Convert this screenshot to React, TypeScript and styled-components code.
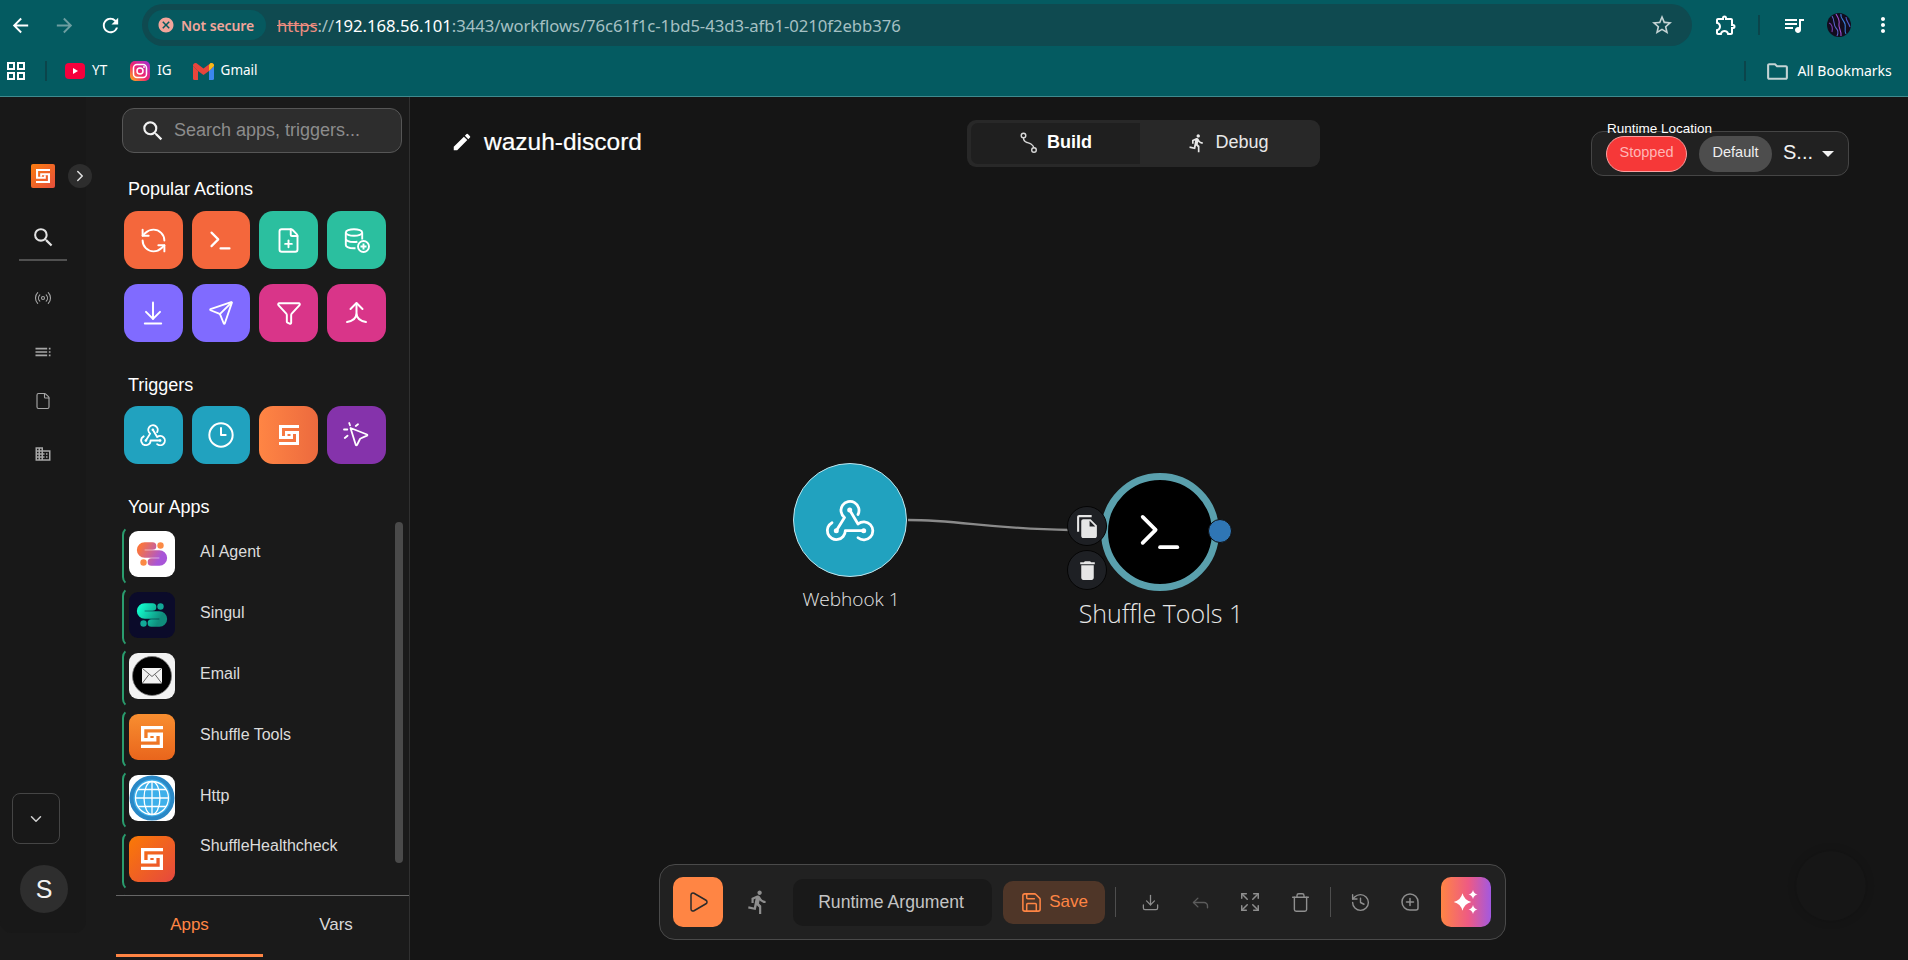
import React from 'react';
import styled, { createGlobalStyle } from 'styled-components';
import {
  ArrowDownToLine,
  ChevronDown,
  ChevronRight,
  Clock3,
  Download,
  Expand,
  File,
  FilePlus,
  Funnel,
  History,
  Play,
  Radio,
  RefreshCcw,
  Reply,
  Save,
  Send,
  Terminal,
  Trash,
} from 'lucide-react';
import {
  MdArrowBack,
  MdArrowForward,
  MdBusiness,
  MdCancel,
  MdDelete,
  MdDirectionsRun,
  MdEdit,
  MdFileCopy,
  MdMoreVert,
  MdOutlineExtension,
  MdOutlineFolder,
  MdQueueMusic,
  MdRefresh,
  MdSearch,
  MdStarBorder,
  MdToc,
} from 'react-icons/md';

const GlobalStyle = createGlobalStyle`
  html, body {
    margin: 0;
    padding: 0;
    background: #151515;
    overflow: hidden;
  }
  * { box-sizing: border-box; }
`;

const Page = styled.div`
  width: 1908px;
  height: 960px;
  display: flex;
  flex-direction: column;
  font-family: 'Liberation Sans', Arial, sans-serif;
  color: #fff;
  overflow: hidden;
`;

/* browser chrome */

const Chrome = styled.header`
  height: 97px;
  flex: none;
  background: #045b61;
  border-bottom: 1px solid #3f8a8e;
  font-family: 'Noto Sans', sans-serif;
`;

const ToolbarRow = styled.div`
  height: 50px;
  display: flex;
  align-items: flex-start;
  padding-top: 4px;
`;

const NavButton = styled.div<{ $w: number; $dim?: boolean }>`
  width: ${(p) => p.$w}px;
  height: 42px;
  display: flex;
  align-items: center;
  justify-content: center;
  color: ${(p) => (p.$dim ? '#6d9ea1' : '#fff')};
  font-size: 23px;
  flex: none;
`;

const UrlBar = styled.div`
  width: 1550px;
  height: 42px;
  margin-left: 10px;
  border-radius: 21px;
  background: #0f4a50;
  display: flex;
  align-items: center;
  padding: 0 18px 0 6px;
  flex: none;
`;

const SecurePill = styled.div`
  width: 118px;
  height: 30px;
  border-radius: 15px;
  background: #06595f;
  color: #f2a59b;
  display: flex;
  align-items: center;
  gap: 6px;
  padding-left: 9px;
  font-size: 14px;
  font-weight: 600;
  letter-spacing: -0.1px;
  white-space: nowrap;
  svg { font-size: 18px; }
`;

const UrlText = styled.div`
  margin-left: 11px;
  font-size: 16.7px;
  color: #a5c0c3;
  white-space: nowrap;
  letter-spacing: -0.05px;
`;

const UrlScheme = styled.span`
  color: #ee8d80;
  text-decoration: line-through;
`;

const UrlHost = styled.span`
  color: #fff;
`;

const StarButton = styled.div`
  margin-left: auto;
  font-size: 24px;
  color: #c4d3d4;
  display: flex;
`;

const ToolIcon = styled.div<{ $ml: number; $w: number }>`
  margin-left: ${(p) => p.$ml}px;
  width: ${(p) => p.$w}px;
  height: 42px;
  flex: none;
  display: flex;
  align-items: center;
  justify-content: center;
  font-size: 24px;
  color: #fff;
`;

const ChromeDivider = styled.div<{ $ml: number; $mt?: number }>`
  margin-left: ${(p) => p.$ml}px;
  margin-top: ${(p) => p.$mt ?? 0}px;
  width: 2px;
  height: 20px;
  background: #0b454b;
  flex: none;
`;

const BookmarksRow = styled.div`
  height: 42px;
  display: flex;
  align-items: center;
  padding-left: 7px;
  font-size: 13.5px;
  color: #fff;
`;

const Bookmark = styled.div<{ $ml: number }>`
  margin-left: ${(p) => p.$ml}px;
  display: flex;
  align-items: center;
  gap: 7px;
  white-space: nowrap;
`;

const BookmarkLabel = styled.span`
  margin-top: -2px;
`;

const AllBookmarks = styled.div`
  margin-left: 19px;
  display: flex;
  align-items: center;
  gap: 8px;
  font-size: 14px;
  white-space: nowrap;
  svg { font-size: 25px; color: #c4d3d4; }
`;

/* main area */

const Main = styled.main`
  flex: 1;
  min-height: 0;
  display: flex;
`;

const LeftArea = styled.aside`
  width: 410px;
  flex: none;
  display: flex;
  background: #1a1a1a;
  border-right: 1px solid #303030;
`;

const Rail = styled.nav`
  width: 86px;
  height: 836px;
  flex: none;
  margin-right: 30px;
  background: #181818;
  border-radius: 0 0 12px 12px;
  padding-top: 67px;
  display: flex;
  flex-direction: column;
  align-items: center;
  position: relative;
`;

const RailBrand = styled.div`
  width: 100%;
  height: 24px;
  padding-left: 31px;
  display: flex;
  align-items: center;
  gap: 13px;
`;

const RailLogo = styled.div`
  width: 24px;
  height: 24px;
  border-radius: 2px;
  background: linear-gradient(135deg, #fb7d10, #e64e3c);
  display: flex;
  align-items: center;
  justify-content: center;
  flex: none;
`;

const ExpandButton = styled.div`
  width: 24px;
  height: 24px;
  border-radius: 50%;
  background: #2d2d2d;
  display: flex;
  align-items: center;
  justify-content: center;
  color: #e0e0e0;
  flex: none;
`;

const RailSearch = styled.div`
  width: 48px;
  height: 73px;
  border-bottom: 2px solid #505050;
  display: flex;
  align-items: center;
  justify-content: center;
  padding-top: 27px;
  font-size: 25px;
  color: #e2e2e2;
`;

const RailNav = styled.div`
  display: grid;
  grid-template-rows: 73px 36px 62px 44px;
  justify-items: center;
  align-items: center;
  color: #a6a6a6;
`;

const RailBottom = styled.div`
  margin-top: auto;
  padding-bottom: 20px;
  display: flex;
  flex-direction: column;
  align-items: center;
`;

const CollapseButton = styled.div`
  width: 48px;
  height: 51px;
  margin-left: -15px;
  border: 1px solid #454545;
  border-radius: 8px;
  display: flex;
  align-items: center;
  justify-content: center;
  color: #d0d0d0;
`;

const UserAvatar = styled.div`
  width: 48px;
  height: 48px;
  margin: 21px 0 0 2px;
  border-radius: 50%;
  background: #2e2e2e;
  display: flex;
  align-items: center;
  justify-content: center;
  font-size: 25px;
  color: #f2f2f2;
`;

const Panel = styled.div`
  flex: 1;
  min-width: 0;
  display: flex;
  flex-direction: column;
  position: relative;
`;

const SearchBox = styled.div`
  height: 45px;
  margin: 11px 7px 0 6px;
  border: 1px solid #565656;
  border-radius: 12px;
  background: #2d2d2d;
  display: flex;
  align-items: center;
  padding-left: 17px;
  gap: 8px;
  font-size: 18px;
  color: #8c8c8c;
  svg { font-size: 26px; color: #f2f2f2; }
`;

const SectionTitle = styled.h3<{ $mt: number }>`
  margin: ${(p) => p.$mt}px 0 0 12px;
  height: 20px;
  line-height: 20px;
  font-size: 18px;
  font-weight: 400;
  color: #fff;
`;

const TileGrid = styled.div<{ $mt: number }>`
  margin: ${(p) => p.$mt}px 0 0 8px;
  display: grid;
  grid-template-columns: repeat(4, 58.5px);
  grid-auto-rows: 58px;
  column-gap: 9.2px;
  row-gap: 15px;
`;

const Tile = styled.div<{ $bg: string }>`
  border-radius: 14px;
  background: ${(p) => p.$bg};
  display: flex;
  align-items: center;
  justify-content: center;
  color: #fff;
`;

const AppList = styled.div`
  margin: 9px 0 0 6px;
  flex: 1;
  min-height: 0;
  overflow: hidden;
`;

const AppRow = styled.div`
  height: 56px;
  margin-bottom: 5px;
  display: flex;
  align-items: center;
  padding-left: 7px;
  position: relative;

  &::before {
    content: '';
    position: absolute;
    left: 0;
    top: 0;
    width: 14px;
    height: 100%;
    border: 2px solid transparent;
    border-left-color: #2a9d6e;
    border-radius: 12px;
  }
`;

const AppIconBox = styled.div<{ $bg: string }>`
  width: 46px;
  height: 46px;
  border-radius: 9px;
  background: ${(p) => p.$bg};
  overflow: hidden;
  flex: none;
  display: flex;
  align-items: center;
  justify-content: center;
`;

const AppName = styled.div<{ $up?: number }>`
  margin-left: 25px;
  font-size: 16px;
  color: #dcdcdc;
  white-space: nowrap;
  transform: translateY(-${(p) => p.$up ?? 2}px);
`;

const ScrollThumb = styled.div`
  position: absolute;
  left: 279px;
  top: 425px;
  width: 8px;
  height: 341px;
  border-radius: 4px;
  background: #4a4a4a;
`;

const Tabs = styled.div`
  height: 65px;
  flex: none;
  border-top: 1px solid #666;
  display: grid;
  grid-template-columns: 147px 1fr;
`;

const TabItem = styled.div<{ $active?: boolean }>`
  height: 61px;
  display: flex;
  align-items: center;
  justify-content: center;
  font-size: 17px;
  color: ${(p) => (p.$active ? '#ff8544' : '#d8d8d8')};
  border-bottom: 3px solid ${(p) => (p.$active ? '#ff8544' : 'transparent')};
`;

/* canvas */

const Canvas = styled.section`
  flex: 1;
  min-width: 0;
  position: relative;
  background: #151515;
`;

const TopBar = styled.div`
  display: grid;
  grid-template-columns: 516px 624px 258px;
  padding: 23px 0 0 41px;
  align-items: start;
`;

const WorkflowName = styled.div`
  height: 44px;
  display: flex;
  align-items: center;
  gap: 11px;
  font-size: 24.5px;
  font-weight: 400;
  -webkit-text-stroke: 0.2px #fff;
  color: #fff;
  svg { font-size: 22px; }
`;

const ModeSwitch = styled.div`
  width: 353px;
  height: 47px;
  border-radius: 9px;
  background: #282828;
  padding: 3px 4px;
  display: grid;
  grid-template-columns: 169px 1fr;
`;

const ModeButton = styled.div<{ $active?: boolean }>`
  border-radius: 7px 0 0 7px;
  background: ${(p) => (p.$active ? '#1f1f1f' : 'transparent')};
  display: flex;
  align-items: center;
  justify-content: center;
  gap: 8px;
  padding-bottom: 2px;
  font-size: 18px;
  font-weight: ${(p) => (p.$active ? 700 : 400)};
  color: ${(p) => (p.$active ? '#fff' : '#e8e8e8')};
`;

const RuntimeBox = styled.div`
  margin-top: 11px;
  width: 258px;
  height: 45px;
  border: 1px solid #454545;
  border-radius: 12px;
  background: #212121;
  display: flex;
  align-items: center;
  padding-left: 14px;
  position: relative;
`;

const RuntimeLabel = styled.div`
  position: absolute;
  left: 15px;
  top: -11px;
  font-size: 13.5px;
  color: #fff;
  white-space: nowrap;
`;

const StatusPill = styled.div`
  width: 81px;
  height: 36px;
  border-radius: 18px;
  background: #f63838;
  border: 1px solid #f9a0a0;
  color: #ffb6b6;
  font-size: 14.5px;
  padding-bottom: 3px;
  display: flex;
  align-items: center;
  justify-content: center;
`;

const DefaultPill = styled.div`
  width: 73px;
  height: 36px;
  margin-left: 12px;
  border-radius: 18px;
  background: #4d4d4d;
  color: #f0f0f0;
  font-size: 14.5px;
  padding-bottom: 3px;
  display: flex;
  align-items: center;
  justify-content: center;
`;

const RuntimeSelect = styled.div`
  margin-left: 11px;
  padding-bottom: 3px;
  font-size: 20px;
  color: #f2f2f2;
  white-space: nowrap;
`;

const SelectCaret = styled.div`
  margin-left: 9px;
  width: 0;
  height: 0;
  border-left: 6px solid transparent;
  border-right: 6px solid transparent;
  border-top: 6px solid #f2f2f2;
`;

/* free canvas: workflow graph */

const EdgeLayer = styled.svg`
  position: absolute;
  left: 490px;
  top: 410px;
  overflow: visible;
`;

const Node = styled.div<{ $x: number; $y: number; $d: number; $bg: string; $border: string }>`
  position: absolute;
  left: ${(p) => p.$x - p.$d / 2 - 410}px;
  top: ${(p) => p.$y - p.$d / 2 - 97}px;
  width: ${(p) => p.$d}px;
  height: ${(p) => p.$d}px;
  border-radius: 50%;
  background: ${(p) => p.$bg};
  border: ${(p) => p.$border};
  display: flex;
  align-items: center;
  justify-content: center;
  color: #fff;
`;

const NodeLabel = styled.div<{ $x: number; $y: number; $size: number }>`
  position: absolute;
  left: ${(p) => p.$x - 410 - 150}px;
  top: ${(p) => p.$y - 97 - 20}px;
  width: 300px;
  height: 40px;
  line-height: 40px;
  text-align: center;
  font-family: 'Open Sans', sans-serif;
  font-weight: 300;
  font-size: ${(p) => p.$size}px;
  color: #e6e6e6;
`;

const NodeAction = styled.div<{ $x: number; $y: number }>`
  position: absolute;
  left: ${(p) => p.$x - 20 - 410}px;
  top: ${(p) => p.$y - 20 - 97}px;
  width: 40px;
  height: 40px;
  border-radius: 50%;
  background: #1e2024;
  border: 1px solid #050505;
  display: flex;
  align-items: center;
  justify-content: center;
  font-size: 25px;
  color: #e6e6e6;
`;

const OutPort = styled.div`
  position: absolute;
  left: ${1220 - 12 - 410}px;
  top: ${531 - 12 - 97}px;
  width: 24px;
  height: 24px;
  border-radius: 50%;
  background: #2f76b5;
  border: 1px solid #101010;
`;

const GhostCircle = styled.div`
  position: absolute;
  left: ${1831 - 35 - 410}px;
  top: ${886 - 35 - 97}px;
  width: 70px;
  height: 70px;
  border-radius: 50%;
  background: #161616;
  box-shadow: 0 0 10px rgba(0, 0, 0, 0.16);
`;

/* bottom dock */

const Dock = styled.div`
  position: absolute;
  left: 249px;
  bottom: 20px;
  width: 847px;
  height: 76px;
  border: 1px solid #4a4a4a;
  border-radius: 16px;
  background: #212121;
  display: flex;
  align-items: center;
  padding-left: 13px;
`;

const RunButton = styled.div`
  width: 50px;
  height: 50px;
  flex: none;
  border-radius: 10px;
  background: #ff8544;
  display: flex;
  align-items: center;
  justify-content: center;
  color: #2b2b2b;
`;

const DockIcon = styled.div<{ $w?: number; $color?: string }>`
  width: ${(p) => p.$w ?? 50}px;
  flex: none;
  display: flex;
  align-items: center;
  justify-content: center;
  color: ${(p) => p.$color ?? '#8f8f8f'};
`;

const ArgumentField = styled.div`
  width: 199px;
  height: 47px;
  flex: none;
  border-radius: 10px;
  background: #191919;
  display: flex;
  align-items: center;
  justify-content: center;
  padding-right: 3px;
  font-size: 17.6px;
  color: #c4c4c4;
`;

const SaveButton = styled.div`
  width: 102px;
  height: 43px;
  margin-left: 11px;
  flex: none;
  border-radius: 10px;
  background: #4f3628;
  display: flex;
  align-items: center;
  justify-content: center;
  gap: 6px;
  font-size: 17px;
  color: #ff8544;
`;

const DockDivider = styled.div<{ $ml: number; $mr: number }>`
  width: 1px;
  height: 30px;
  flex: none;
  margin: 0 ${(p) => p.$mr}px 0 ${(p) => p.$ml}px;
  background: #4e4e4e;
`;

const AiButton = styled.div`
  width: 50px;
  height: 50px;
  margin-left: 6px;
  flex: none;
  border-radius: 10px;
  background: linear-gradient(90deg, #ff8544 0%, #ee5a84 55%, #a259e0 100%);
  display: flex;
  align-items: center;
  justify-content: center;
`;

/* drawings */

const ShuffleMark = ({ size = 20, color = '#fff' }: { size?: number; color?: string }) => (
  <svg width={size} height={size} viewBox="0 0 20 20" fill={color}>
    <path d="M0 0H20V3H3V11H11.500V9H14V14H0Z" />
    <path d="M20 6V20H0V17H17V9H8.500V11H6V6Z" />
  </svg>
);

const SMark = ({ id, from, to, dot }: { id: string; from: string; to: string; dot: string }) => (
  <svg width="46" height="46" viewBox="0 0 46 46">
    <defs>
      <linearGradient id={id} x1="0" y1="0" x2="1" y2="0.4">
        <stop offset="0" stopColor={from} />
        <stop offset="1" stopColor={to} />
      </linearGradient>
    </defs>
    <path
      d="M23.500 15H15.700a4 4 0 0 0 0 8H30.300a4 4 0 0 1 0 8H22.500"
      fill="none"
      stroke={`url(#${id})`}
      strokeWidth="7.700"
      strokeLinecap="round"
    />
    <circle cx="31.500" cy="14.500" r="3.200" fill={dot} />
    <circle cx="14.500" cy="31.500" r="3.200" fill={dot} />
  </svg>
);

const WebhookMark = ({ width, strokeWidth }: { width: number; strokeWidth: number }) => (
  <svg width={width} height={(width * 43) / 50} viewBox="-2 -1 50 43" fill="none" stroke="#fff" strokeWidth={strokeWidth} strokeLinecap="round" strokeLinejoin="round">
    <path d="M31 14.500A9 9 0 1 0 17.500 17.500L9.300 30.700" />
    <path d="M22.700 10 31 24A9 9 0 1 1 31 37.700" />
    <path d="M5 22.700A9 9 0 1 0 18.300 30.700H36.700" />
    <g fill="#fff" stroke="none">
      <circle cx="22.700" cy="10" r="2.500" />
      <circle cx="9.300" cy="30.700" r="2.500" />
      <circle cx="36.700" cy="30.700" r="2.500" />
    </g>
  </svg>
);

const CursorClick = () => (
  <svg width="26" height="26" viewBox="0 0 26 26" fill="none" stroke="#fff" strokeWidth="1.800" strokeLinecap="round" strokeLinejoin="round">
    <path d="M7.500 6 24 12.500c.5.2.5 1 0 1.200L17.500 16.500a.8.8 0 0 0-.5.5L14 23c-.2.5-1 .5-1.200 0Z" />
    <path d="M6.200 1 7 3.300M15 2.200 12.800 4M1 7.500h3.300M1.800 16l2.700-2.300" />
  </svg>
);

const DatabasePlus = () => (
  <svg width="27" height="27" viewBox="0 0 27 27" fill="none" stroke="#fff" strokeWidth="1.900">
    <ellipse cx="11" cy="5.500" rx="8.200" ry="3.200" />
    <path d="M2.800 5.500V18c0 1.800 3.400 3.200 8.200 3.200h1.500M2.800 11.800c0 1.800 3.400 3.200 8.200 3.200 1.200 0 2.400-.1 3.400-.3M19.200 5.500v7" />
    <circle cx="20.500" cy="19.500" r="5.500" />
    <path d="M20.500 16.500v6M17.500 19.500h6" />
  </svg>
);

const MergeArrow = () => (
  <svg width="27" height="27" viewBox="0 0 27 27" fill="none" stroke="#fff" strokeWidth="2" strokeLinecap="round" strokeLinejoin="round">
    <path d="M7.500 9 13.500 3l6 6" />
    <path d="M13.500 3.500V13c0 5-4 8-9.500 9M13.500 13c0 5 4 8 9.500 9" />
  </svg>
);

const RouteMark = () => (
  <svg width="20" height="24" viewBox="0 0 20 24" fill="none" stroke="#d8d8d8" strokeWidth="1.400">
    <circle cx="4.500" cy="4.500" r="2.300" />
    <circle cx="15" cy="19" r="2.300" />
    <path d="M4.500 6.800c0 3 1 4 3.500 4.700s3 .8 4 1.500 2.500 1.800 2.800 3.700" />
  </svg>
);

const starPath = (cx: number, cy: number, r: number) => {
  const k = r * 0.2;
  return `M${cx} ${cy - r}Q${cx + k} ${cy - k} ${cx + r} ${cy}Q${cx + k} ${cy + k} ${cx} ${cy + r}Q${cx - k} ${cy + k} ${cx - r} ${cy}Q${cx - k} ${cy - k} ${cx} ${cy - r}Z`;
};

const SparkleMark = () => (
  <svg width="28" height="28" viewBox="0 0 28 28" fill="#fff">
    <path d={starPath(10.5, 14, 8.8)} />
    <path d={starPath(21, 6.5, 4.5)} />
    <path d={starPath(21, 21.5, 4.5)} />
  </svg>
);

const AddBubble = () => (
  <svg width="20" height="20" viewBox="0 0 20 20" fill="none" stroke="#8f8f8f" strokeWidth="1.500" strokeLinecap="round">
    <path d="M10 2a8 8 0 1 0 0 16h6a2 2 0 0 0 2-2v-6a8 8 0 0 0-8-8Z" />
    <path d="M10 6.500v7M6.500 10h7" />
  </svg>
);

const AppsGridIcon = () => (
  <svg width="18" height="18" viewBox="0 0 18 18" fill="none" stroke="#fff" strokeWidth="2">
    <rect x="1" y="1" width="6" height="6" />
    <rect x="11" y="1" width="6" height="6" />
    <rect x="1" y="11" width="6" height="6" />
    <rect x="11" y="11" width="6" height="6" />
  </svg>
);

const YoutubeIcon = () => (
  <svg width="20" height="16" viewBox="0 0 20 16">
    <rect width="20" height="16" rx="4" fill="#f6003c" />
    <path d="M8 5l5 3-5 3Z" fill="#fff" />
  </svg>
);

const InstagramIcon = () => (
  <svg width="20" height="20" viewBox="0 0 20 20" fill="none">
    <defs>
      <linearGradient id="igGrad" x1="0" y1="1" x2="1" y2="0">
        <stop offset="0" stopColor="#fdb813" />
        <stop offset="0.45" stopColor="#f0266f" />
        <stop offset="1" stopColor="#a12fd8" />
      </linearGradient>
    </defs>
    <rect width="20" height="20" rx="5" fill="url(#igGrad)" />
    <rect x="3.500" y="3.500" width="13" height="13" rx="3.500" stroke="#fff" strokeWidth="1.500" />
    <circle cx="10" cy="10" r="3" stroke="#fff" strokeWidth="1.500" />
    <circle cx="14" cy="6" r="0.900" fill="#fff" />
  </svg>
);

const GmailIcon = () => (
  <svg width="21" height="17" viewBox="0 0 21 17">
    <path d="M0 3v12.500A1.500 1.500 0 0 0 1.500 17H5V8Z" fill="#e8453c" />
    <path d="M21 3v12.500a1.500 1.500 0 0 1-1.500 1.500H16V8Z" fill="#3b87f0" />
    <path d="M0 2.500C0 .5 2.300-.6 3.900.6L10.500 5.500l6.600-4.900C18.700-.6 21 .5 21 2.500V3l-5 5-5.500 4L5 8 0 3Z" fill="#e8453c" />
    <path d="M16 2.200l1.100-1.600C18.700-.6 21 .5 21 2.500V3l-5 5Z" fill="#f6bb17" />
  </svg>
);

const ProfileAvatar = () => (
  <svg width="24" height="24" viewBox="0 0 24 24" fill="none" strokeWidth="1.100">
    <circle cx="12" cy="12" r="12" fill="#120c1e" stroke="none" />
    <path d="M5 3c3 4 1 9 4 12s2 6 1 8" stroke="#5a63c8" />
    <path d="M9 1c2 4 4 6 3 10s3 7 2 12" stroke="#a14fd0" />
    <path d="M14 1c-1 4 3 6 4 10s-1 7 1 10" stroke="#3b7fd8" />
    <path d="M2 10c3 1 4 5 3 9" stroke="#7a3fb0" />
    <path d="M19 4c0 4 3 6 4 10" stroke="#4a5bc0" />
  </svg>
);

const EmailApp = () => (
  <svg width="46" height="46" viewBox="0 0 46 46">
    <circle cx="23" cy="23" r="19.500" fill="#000" stroke="#777" strokeWidth="0.800" />
    <rect x="13" y="15" width="20" height="15.500" rx="1" fill="#f2f2f2" />
    <path d="M13.500 15.500 23 23.500 32.500 15.500M13.500 30 20 21.500M32.500 30 26 21.500" fill="none" stroke="#666" strokeWidth="1" />
  </svg>
);

const GlobeApp = () => (
  <svg width="46" height="46" viewBox="0 0 46 46" fill="none">
    <circle cx="23" cy="23" r="20.500" fill="#3fb0ea" stroke="#2a88c6" strokeWidth="4" />
    <g stroke="#fff" strokeWidth="1.300">
      <circle cx="23" cy="23" r="16.500" />
      <ellipse cx="23" cy="23" rx="8" ry="16.500" />
      <path d="M23 6.500v33M6.500 23h33M9 14.500h28M9 31.500h28" />
    </g>
  </svg>
);

const popularActions = [
  { bg: '#f4673c', icon: <RefreshCcw size={29} strokeWidth={1.6} /> },
  { bg: '#f4673c', icon: <Terminal size={27} strokeWidth={1.9} /> },
  { bg: '#2bbf9f', icon: <FilePlus size={27} strokeWidth={1.7} /> },
  { bg: '#2bbf9f', icon: <DatabasePlus /> },
  { bg: '#806bff', icon: <ArrowDownToLine size={28} strokeWidth={1.7} /> },
  { bg: '#806bff', icon: <Send size={26} strokeWidth={1.7} /> },
  { bg: '#d93589', icon: <Funnel size={26} strokeWidth={1.8} /> },
  { bg: '#d93589', icon: <MergeArrow /> },
];

const triggers = [
  { bg: '#21a2bf', icon: <WebhookMark width={26} strokeWidth={3.6} /> },
  { bg: '#21a2bf', icon: <Clock3 size={28} strokeWidth={1.7} /> },
  { bg: 'linear-gradient(90deg, #ff8544, #ec6a3e)', icon: <ShuffleMark /> },
  { bg: '#8533ab', icon: <CursorClick /> },
];

const yourApps: { name: string; bg: string; icon: React.ReactNode; up?: number }[] = [
  { name: 'AI Agent', bg: '#fff', icon: <SMark id="sA" from="#f9743f" to="#a855d8" dot="#fb8a45" /> },
  { name: 'Singul', bg: '#0b0b2a', icon: <SMark id="sB" from="#12f5c8" to="#0f8d7c" dot="#12a898" /> },
  { name: 'Email', bg: '#f2f2f2', icon: <EmailApp /> },
  { name: 'Shuffle Tools', bg: 'linear-gradient(180deg, #f88e30, #e9651c)', icon: <ShuffleMark size={22} /> },
  { name: 'Http', bg: '#fff', icon: <GlobeApp /> },
  { name: 'ShuffleHealthcheck', bg: 'linear-gradient(135deg, #fb7a05, #e5483f)', icon: <ShuffleMark size={22} />, up: 13 },
  { name: '', bg: 'transparent', icon: null },
];

const App: React.FC = () => (
  <Page>
    <GlobalStyle />
    <Chrome>
      <ToolbarRow>
        <NavButton $w={40}><MdArrowBack /></NavButton>
        <NavButton $w={48} $dim><MdArrowForward /></NavButton>
        <NavButton $w={44}><MdRefresh /></NavButton>
        <UrlBar>
          <SecurePill><MdCancel />Not secure</SecurePill>
          <UrlText>
            <UrlScheme>https</UrlScheme>://<UrlHost>192.168.56.101</UrlHost>:3443/workflows/76c61f1c-1bd5-43d3-afb1-0210f2ebb376
          </UrlText>
          <StarButton><MdStarBorder /></StarButton>
        </UrlBar>
        <ToolIcon $ml={16} $w={36}><MdOutlineExtension /></ToolIcon>
        <ChromeDivider $ml={14} $mt={11} />
        <ToolIcon $ml={16} $w={36}><MdQueueMusic /></ToolIcon>
        <ToolIcon $ml={15} $w={24}><ProfileAvatar /></ToolIcon>
        <ToolIcon $ml={20} $w={24}><MdMoreVert /></ToolIcon>
      </ToolbarRow>
      <BookmarksRow>
        <AppsGridIcon />
        <ChromeDivider $ml={20} />
        <Bookmark $ml={18}><YoutubeIcon /><BookmarkLabel>YT</BookmarkLabel></Bookmark>
        <Bookmark $ml={23}><InstagramIcon /><BookmarkLabel>IG</BookmarkLabel></Bookmark>
        <Bookmark $ml={21}><GmailIcon /><BookmarkLabel>Gmail</BookmarkLabel></Bookmark>
        <ChromeDivider $ml={1486} />
        <AllBookmarks><MdOutlineFolder /><BookmarkLabel>All Bookmarks</BookmarkLabel></AllBookmarks>
      </BookmarksRow>
    </Chrome>

    <Main>
      <LeftArea>
        <Rail>
          <RailBrand>
            <RailLogo><ShuffleMark size={14} /></RailLogo>
            <ExpandButton><ChevronRight size={18} /></ExpandButton>
          </RailBrand>
          <RailSearch><MdSearch /></RailSearch>
          <RailNav>
            <Radio size={18} strokeWidth={1.5} />
            <MdToc size={20} />
            <File size={18} strokeWidth={1.5} />
            <MdBusiness size={18} />
          </RailNav>
          <RailBottom>
            <CollapseButton><ChevronDown size={18} /></CollapseButton>
            <UserAvatar>S</UserAvatar>
          </RailBottom>
        </Rail>
        <Panel>
          <SearchBox><MdSearch />Search apps, triggers...</SearchBox>
          <SectionTitle $mt={26}>Popular Actions</SectionTitle>
          <TileGrid $mt={12}>
            {popularActions.map((item, index) => (
              <Tile key={index} $bg={item.bg}>{item.icon}</Tile>
            ))}
          </TileGrid>
          <SectionTitle $mt={33}>Triggers</SectionTitle>
          <TileGrid $mt={11}>
            {triggers.map((item, index) => (
              <Tile key={index} $bg={item.bg}>{item.icon}</Tile>
            ))}
          </TileGrid>
          <SectionTitle $mt={33}>Your Apps</SectionTitle>
          <AppList>
            {yourApps.map((app, index) => (
              <AppRow key={index}>
                <AppIconBox $bg={app.bg}>{app.icon}</AppIconBox>
                <AppName $up={app.up}>{app.name}</AppName>
              </AppRow>
            ))}
          </AppList>
          <ScrollThumb />
          <Tabs>
            <TabItem $active>Apps</TabItem>
            <TabItem>Vars</TabItem>
          </Tabs>
        </Panel>
      </LeftArea>

      <Canvas>
        <TopBar>
          <WorkflowName><MdEdit />wazuh-discord</WorkflowName>
          <ModeSwitch>
            <ModeButton $active><RouteMark />Build</ModeButton>
            <ModeButton><MdDirectionsRun size={20} />Debug</ModeButton>
          </ModeSwitch>
          <RuntimeBox>
            <RuntimeLabel>Runtime Location</RuntimeLabel>
            <StatusPill>Stopped</StatusPill>
            <DefaultPill>Default</DefaultPill>
            <RuntimeSelect>S...</RuntimeSelect>
            <SelectCaret />
          </RuntimeBox>
        </TopBar>

        <EdgeLayer width="180" height="20" viewBox="0 0 180 20">
          <path d="M8 13C60 13 90 22 170 23" fill="none" stroke="#8a8a8a" strokeWidth="2.300" />
        </EdgeLayer>
        <Node $x={850} $y={520} $d={114} $bg="#21a2bf" $border="1px solid #bfe4ec">
          <WebhookMark width={50} strokeWidth={2.8} />
        </Node>
        <NodeLabel $x={851} $y={599} $size={19}>Webhook 1</NodeLabel>
        <Node $x={1160} $y={532} $d={118} $bg="#000" $border="7px solid #5aa0ad">
          <Terminal size={52} strokeWidth={1.7} />
        </Node>
        <NodeLabel $x={1161} $y={613} $size={25}>Shuffle Tools 1</NodeLabel>
        <NodeAction $x={1087} $y={526}><MdFileCopy /></NodeAction>
        <NodeAction $x={1087} $y={570}><MdDelete /></NodeAction>
        <OutPort />
        <GhostCircle />

        <Dock>
          <RunButton><Play size={24} strokeWidth={1.5} /></RunButton>
          <DockIcon $w={70}><MdDirectionsRun size={26} /></DockIcon>
          <ArgumentField>Runtime Argument</ArgumentField>
          <SaveButton><Save size={23} strokeWidth={1.6} />Save</SaveButton>
          <DockDivider $ml={10} $mr={9} />
          <DockIcon><Download size={19} strokeWidth={1.6} /></DockIcon>
          <DockIcon $color="#5c5c5c"><Reply size={21} strokeWidth={1.6} /></DockIcon>
          <DockIcon><Expand size={22} strokeWidth={1.6} /></DockIcon>
          <DockIcon><Trash size={21} strokeWidth={1.6} /></DockIcon>
          <DockDivider $ml={5} $mr={4} />
          <DockIcon><History size={21} strokeWidth={1.6} /></DockIcon>
          <DockIcon><AddBubble /></DockIcon>
          <AiButton><SparkleMark /></AiButton>
        </Dock>
      </Canvas>
    </Main>
  </Page>
);

export default App;
